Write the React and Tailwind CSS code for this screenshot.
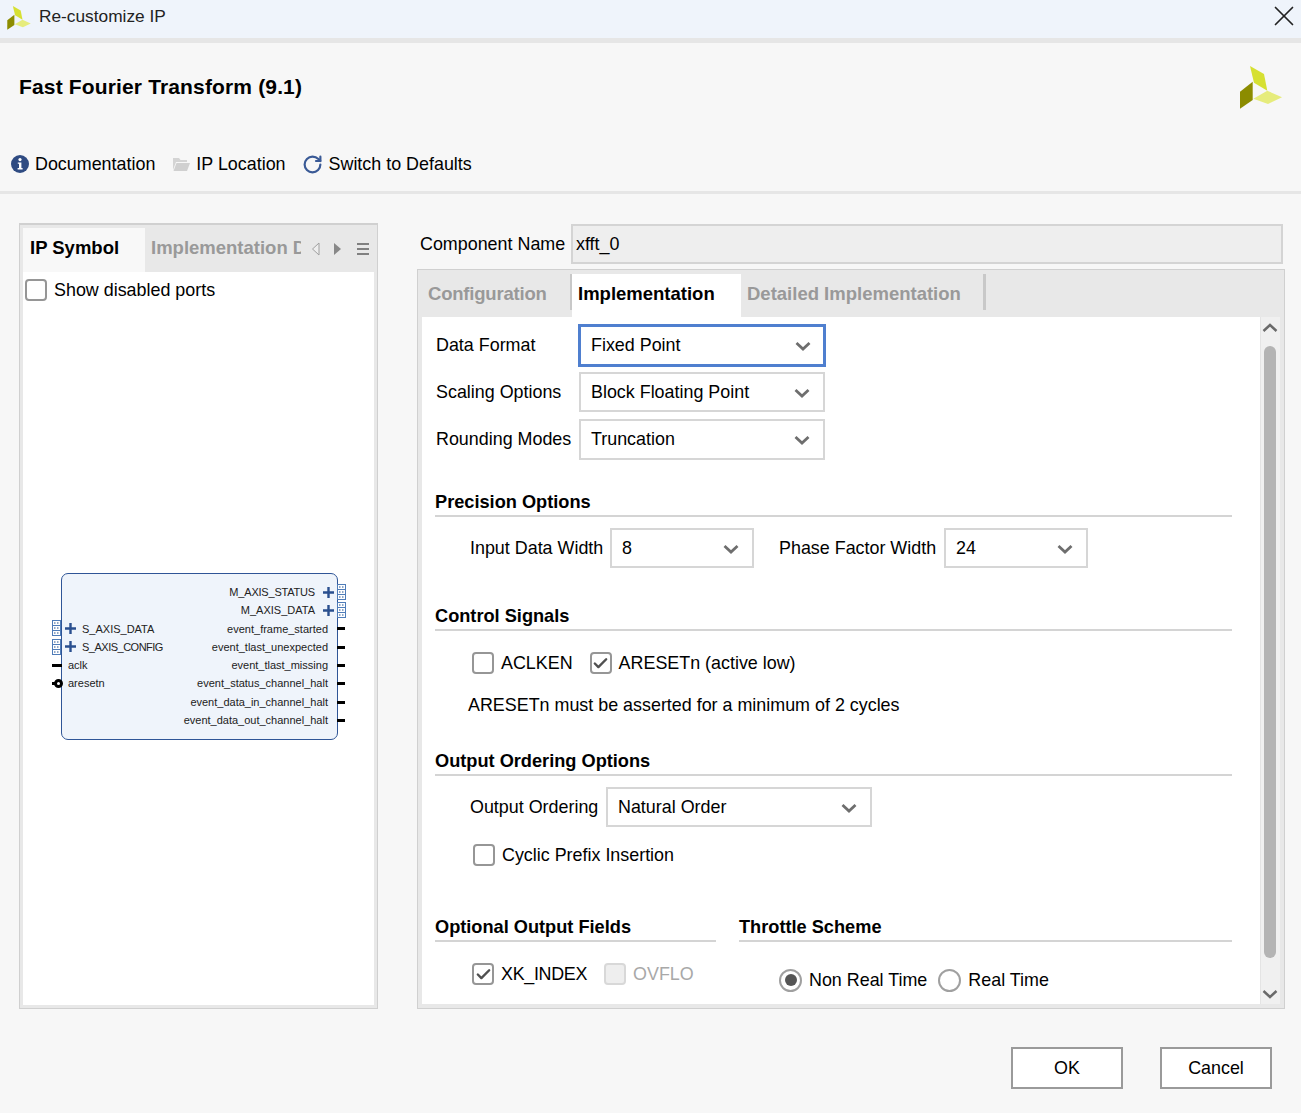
import React from 'react';
import { X, RotateCw, Check } from 'lucide-react';

const Logo = ({ className }) => (
  <svg viewBox="0 0 42 43" className={className}>
    <polygon points="10,0 24,8 27.3,24.7 14,16.7" fill="#d6e032" />
    <polygon points="12.7,15.7 12.7,34 0,42.7 0,25.7" fill="#8c8c00" />
    <polygon points="27.3,24.7 42,31.3 28,38 13.3,32.7" fill="#e6ec7c" />
  </svg>
);

const Chevron = () => (
  <svg viewBox="0 0 16 10" className="w-[16px] h-[10px] shrink-0 mt-[1px] -mr-[1px]">
    <path d="M1.5 2 L8 8 L14.5 2" fill="none" stroke="#6e6e6e" strokeWidth="2.8" />
  </svg>
);

const Select = ({ value, className, focused }) => (
  <div className={`flex items-center justify-between bg-white shrink-0 ${focused ? 'border-[3px] border-[#4f7fcf] pl-[10px] pr-[13px]' : 'border-2 border-[#d6d6d6] pl-[10px] pr-[14px]'} ${className}`}>
    <span>{value}</span>
    <Chevron />
  </div>
);

const CheckBox = ({ checked, disabled, className = '' }) => (
  <div className={`w-[22px] h-[22px] rounded-[4px] border-2 flex items-center justify-center shrink-0 ${disabled ? 'border-[#d8d8d8] bg-[#eeeeee]' : 'border-[#969696] bg-white'} ${className}`}>
    {checked && <Check size={17} strokeWidth={3.4} color="#505050" />}
  </div>
);

const Radio = ({ selected }) => (
  <div className="w-[23px] h-[23px] rounded-full border-2 border-[#a0a0a0] bg-white flex items-center justify-center shrink-0">
    {selected && <div className="w-[12px] h-[12px] rounded-full bg-[#555555]" />}
  </div>
);

const SectionTitle = ({ children, className = '' }) => (
  <div className={`h-[27px] border-b-2 border-[#d4d4d4] font-bold text-[18.2px] leading-[24px] ${className}`}>
    {children}
  </div>
);

const BusIcon = () => (
  <svg viewBox="0 0 9 16" className="w-[9px] h-[16px] shrink-0">
    <rect x="0.5" y="0.5" width="8" height="15" fill="#ffffff" stroke="#4f7cb8" />
    <path d="M1 5.5H8M1 10.5H8" stroke="#4f7cb8" />
    <path d="M2 3H3.5M5 3H6.5M2 8H3.5M5 8H6.5M2 13H3.5M5 13H6.5" stroke="#23508f" />
  </svg>
);

const Plus = () => (
  <svg viewBox="0 0 11 11" className="w-[11px] h-[11px] shrink-0">
    <path d="M5.5 0V11M0 5.5H11" stroke="#2a4f8f" strokeWidth="2.4" />
  </svg>
);

const rightPins = [
  'event_frame_started',
  'event_tlast_unexpected',
  'event_tlast_missing',
  'event_status_channel_halt',
  'event_data_in_channel_halt',
  'event_data_out_channel_halt',
];

const IpSymbol = () => (
  <div className="w-[277px] h-[167px] ml-[38px] mt-[269px] border border-[#2f5597] rounded-[7px] bg-[#eff4fb] relative text-[11px] leading-[18px] text-[#222222] flex justify-between pt-[9px]">
    <div className="pt-[36.6px]">
      <div className="h-[18.3px] flex items-center pl-[3px] relative">
        <Plus />
        <span className="ml-[6px]">S_AXIS_DATA</span>
        <div className="absolute left-[-10px] top-[1px]"><BusIcon /></div>
      </div>
      <div className="h-[18.3px] flex items-center pl-[3px] relative">
        <Plus />
        <span className="ml-[6px] tracking-[-0.5px]">S_AXIS_CONFIG</span>
        <div className="absolute left-[-10px] top-[1px]"><BusIcon /></div>
      </div>
      <div className="h-[18.3px] flex items-center pl-[6px] relative">
        aclk
        <div className="absolute left-[-10px] top-[8px] w-[10px] h-[3px] bg-black" />
      </div>
      <div className="h-[18.3px] flex items-center pl-[6px] relative">
        aresetn
        <div className="absolute left-[-10px] top-[8px] w-[6px] h-[3px] bg-black" />
        <div className="absolute left-[-8px] top-[5px] w-[9px] h-[9px] rounded-full border-[3px] border-black bg-white" />
      </div>
    </div>
    <div className="text-right">
      <div className="h-[18.3px] flex items-center justify-end pr-[3px] relative">
        <span className="mr-[8px] tracking-[-0.2px]">M_AXIS_STATUS</span>
        <Plus />
        <div className="absolute right-[-9px] top-[1px]"><BusIcon /></div>
      </div>
      <div className="h-[18.3px] flex items-center justify-end pr-[3px] relative">
        <span className="mr-[8px]">M_AXIS_DATA</span>
        <Plus />
        <div className="absolute right-[-9px] top-[1px]"><BusIcon /></div>
      </div>
      {rightPins.map((name) => (
        <div key={name} className="h-[18.3px] flex items-center justify-end pr-[9px] relative">
          {name}
          <div className="absolute right-[-8px] top-[8px] w-[8px] h-[3px] bg-black" />
        </div>
      ))}
    </div>
  </div>
);

const LeftPanel = () => (
  <div className="w-[359px] h-[786px] border border-[#d0d0d0] border-t-2 p-[3px] bg-[#e8e8e8] flex flex-col shrink-0">
    <div className="h-[44px] flex items-center bg-[#e8e8e8] relative shrink-0">
      <div className="w-[122px] h-full bg-[#f8f8f8] pl-[7px] pb-[4px] flex items-center font-bold text-[18.5px]">IP Symbol</div>
      <div className="w-[150px] ml-[6px] pb-[4px] overflow-hidden whitespace-nowrap font-bold text-[18.5px] text-[#999999]">Implementation Details</div>
      <svg viewBox="0 0 9 14" className="w-[9px] h-[14px] ml-[10px] -mt-[3px]">
        <path d="M8 1 L1.5 7 L8 13 Z" fill="#eeeeee" stroke="#a0a0a0" />
      </svg>
      <svg viewBox="0 0 9 14" className="w-[9px] h-[14px] ml-[13px] -mt-[3px]">
        <path d="M1 1 L8 7 L1 13 Z" fill="#888888" />
      </svg>
      <div className="ml-[15px] w-[12px] flex flex-col gap-[3px] -mt-[3px]">
        <div className="h-[2px] bg-[#808080]" />
        <div className="h-[2px] bg-[#808080]" />
        <div className="h-[2px] bg-[#808080]" />
      </div>
    </div>
    <div className="flex-1 bg-white">
      <div className="flex items-center pl-[2px] pt-[5px] gap-[7px]">
        <CheckBox />
        <span>Show disabled ports</span>
      </div>
      <IpSymbol />
    </div>
  </div>
);

const Tabs = () => (
  <div className="h-[43px] flex items-stretch text-[18.5px] font-bold bg-[#e8e8e8] shrink-0">
    <div className="w-[150px] flex items-center pl-[6px] pt-[3px] tracking-[-0.2px] text-[#999999] border-r-2 border-[#c8c8c8] mb-[7px]">Configuration</div>
    <div className="w-[169px] flex items-center pl-[6px] pb-[4px] bg-white">Implementation</div>
    <div className="w-[245px] flex items-center pl-[6px] pt-[3px] text-[#999999] border-r-[3px] border-[#c8c8c8] mb-[7px]">Detailed Implementation</div>
  </div>
);

const Scrollbar = () => (
  <div className="w-[20px] bg-[#f0f0f0] border-l border-[#e4e4e4] pr-[2px] flex flex-col items-center shrink-0">
    <svg viewBox="0 0 16 10" className="w-[16px] h-[10px] mt-[6px]">
      <path d="M1.5 8 L8 2 L14.5 8" fill="none" stroke="#6a6a6a" strokeWidth="2.4" />
    </svg>
    <div className="w-[12px] h-[612px] mt-[13px] rounded-full bg-[#b4b4b4]" />
    <svg viewBox="0 0 16 10" className="w-[16px] h-[10px] mt-[31px]">
      <path d="M1.5 2 L8 8 L14.5 2" fill="none" stroke="#6a6a6a" strokeWidth="2.4" />
    </svg>
  </div>
);

const FormBody = () => (
  <div className="flex-1 pl-[13px] pr-[28px] pt-[7px] relative">
    <div className="flex items-center h-[43px] pl-[1px]">
      <span className="w-[142px]">Data Format</span>
      <Select value="Fixed Point" focused className="w-[248px] h-[43px]" />
    </div>
    <div className="flex items-center h-[40px] mt-[5px] pl-[1px]">
      <span className="w-[143px]">Scaling Options</span>
      <Select value="Block Floating Point" className="w-[246px] h-[40px]" />
    </div>
    <div className="flex items-center h-[41px] mt-[7px] pl-[1px]">
      <span className="w-[143px]">Rounding Modes</span>
      <Select value="Truncation" className="w-[246px] h-[41px]" />
    </div>

    <SectionTitle className="mt-[30px]">Precision Options</SectionTitle>
    <div className="flex items-center h-[40px] mt-[11px] pl-[35px]">
      <span className="w-[140px]">Input Data Width</span>
      <Select value="8" className="w-[144px] h-[40px]" />
      <span className="ml-[25px] w-[165px]">Phase Factor Width</span>
      <Select value="24" className="w-[144px] h-[40px]" />
    </div>

    <SectionTitle className="mt-[36px]">Control Signals</SectionTitle>
    <div className="flex items-center h-[24px] mt-[20px] pl-[37px]">
      <CheckBox />
      <span className="ml-[7px]">ACLKEN</span>
      <CheckBox checked className="ml-[17px]" />
      <span className="ml-[7px]">ARESETn (active low)</span>
    </div>
    <div className="mt-[18px] h-[24px] pl-[33px] leading-[24px]">ARESETn must be asserted for a minimum of 2 cycles</div>

    <SectionTitle className="mt-[32px]">Output Ordering Options</SectionTitle>
    <div className="flex items-center h-[40px] mt-[11px] pl-[35px]">
      <span className="w-[136px]">Output Ordering</span>
      <Select value="Natural Order" className="w-[266px] h-[40px]" />
    </div>
    <div className="flex items-center h-[24px] mt-[16px] pl-[38px]">
      <CheckBox />
      <span className="ml-[7px]">Cyclic Prefix Insertion</span>
    </div>

    <div className="flex mt-[48px]">
      <div className="w-[281px]">
        <SectionTitle>Optional Output Fields</SectionTitle>
        <div className="flex items-center h-[24px] mt-[20px] pl-[37px]">
          <CheckBox checked />
          <span className="ml-[7px] tracking-[-0.3px]">XK_INDEX</span>
          <CheckBox disabled className="ml-[17px]" />
          <span className="ml-[7px] text-[#a8a8a8]">OVFLO</span>
        </div>
      </div>
      <div className="flex-1 ml-[23px]">
        <SectionTitle>Throttle Scheme</SectionTitle>
        <div className="flex items-center h-[24px] mt-[26px] pl-[40px]">
          <Radio selected />
          <span className="ml-[7px]">Non Real Time</span>
          <div className="ml-[11px]"><Radio /></div>
          <span className="ml-[7px]">Real Time</span>
        </div>
      </div>
    </div>
  </div>
);

const RightPanel = () => (
  <div className="w-[868px] ml-[39px] shrink-0">
    <div className="flex items-center h-[40px] mt-[1px]">
      <span className="ml-[3px] w-[151px]">Component Name</span>
      <div className="w-[712px] h-[40px] bg-[#eeeeee] border-2 border-[#d4d4d4] flex items-center pl-[3px]">xfft_0</div>
    </div>
    <div className="h-[740px] mt-[5px] border border-[#d0d0d0] p-[4px] bg-[#e8e8e8] flex flex-col">
      <Tabs />
      <div className="flex-1 bg-white flex min-h-0">
        <FormBody />
        <Scrollbar />
      </div>
    </div>
  </div>
);

const App = () => (
  <div className="w-[1301px] h-[1113px] bg-[#f7f7f7] text-black text-[17.9px] font-['Liberation_Sans',Arial,sans-serif] flex flex-col overflow-hidden">
    <div className="h-[38px] bg-[#eff4fb] flex items-center pl-[7px] shrink-0">
      <Logo className="w-[24px] h-[24px] -mt-[3px]" />
      <span className="ml-[8px] text-[17.3px] text-[#222222] -mt-[5px]">Re-customize IP</span>
      <X size={34} strokeWidth={1.2} className="ml-auto -mt-[7px]" color="#222222" />
    </div>
    <div className="h-[5px] bg-[#e6e6e6] shrink-0" />
    <div className="h-[148px] shrink-0 flex flex-col">
      <div className="h-[107px] flex justify-between pl-[19px] pr-[19px]">
        <div className="font-bold text-[21px] mt-[28px] tracking-[0.15px]">Fast Fourier Transform (9.1)</div>
        <Logo className="w-[42px] h-[43px] mt-[23px]" />
      </div>
      <div className="flex items-center pl-[11px] h-[28px]">
        <svg viewBox="0 0 18 18" className="w-[18px] h-[18px]">
          <circle cx="9" cy="9" r="9" fill="#2f4b82" />
          <circle cx="9" cy="4.6" r="1.6" fill="#ffffff" />
          <path d="M6.8 7.4H10.4V13H11.6V14.4H6.6V13H8V8.8H6.8Z" fill="#ffffff" />
        </svg>
        <span className="ml-[6px]">Documentation</span>
        <svg viewBox="0 0 18 16" className="w-[18px] h-[16px] ml-[17px]">
          <path d="M1 2H7L8.5 4H15V6H4L1 14Z" fill="#d4d4d4" />
          <path d="M4.5 7H18L15 15H1.5Z" fill="#d0d0d0" />
        </svg>
        <span className="ml-[6px]">IP Location</span>
        <RotateCw size={21} strokeWidth={2.5} color="#3a5a96" className="ml-[16px]" />
        <span className="ml-[6px]">Switch to Defaults</span>
      </div>
    </div>
    <div className="h-[3px] bg-[#e6e6e6] shrink-0" />
    <div className="flex pl-[19px] pt-[29px] shrink-0">
      <LeftPanel />
      <RightPanel />
    </div>
    <div className="flex justify-end gap-[37px] pr-[29px] mt-[38px]">
      <button className="w-[112px] h-[42px] border-2 border-[#9a9a9a] bg-white">OK</button>
      <button className="w-[112px] h-[42px] border-2 border-[#9a9a9a] bg-white">Cancel</button>
    </div>
  </div>
);

export default App;
